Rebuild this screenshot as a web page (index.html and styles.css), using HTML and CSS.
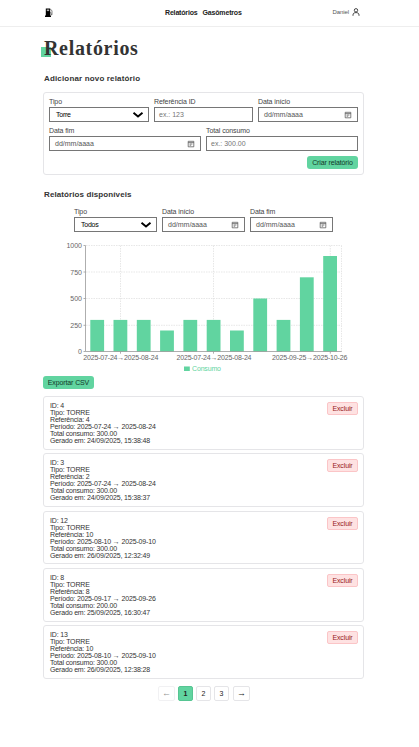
FILE: index.html
```html
<!DOCTYPE html>
<html lang="pt-BR">
<head>
<meta charset="utf-8">
<title>Relatórios</title>
<link rel="stylesheet" href="styles.css">
</head>
<body>
<svg class="defs" width="0" height="0">
  <symbol id="cal" viewBox="0 0 8 8"><path d="M1.2 1.3h5.6v5.5H1.2z M1.2 2.6h5.6 M2.6 4h2.8 M2.6 5.2h1.6" fill="none" stroke="#555" stroke-width=".75"/></symbol>
  <symbol id="chev" viewBox="0 0 12 8"><path d="M1.5 1.7 6 5.5l4.5-3.8" fill="none" stroke="#000" stroke-width="1.9"/></symbol>
</svg>
<header class="top">
  <div class="wrap bar">
    <svg class="pump" width="10" height="10" viewBox="0 0 10 10"><path d="M1.8 .5h4.4v7H7v1.4H1V7.5h.8z" fill="#000"/><path d="M2.8 1.5h2.4v1.6H2.8z" fill="#aaa"/><path d="M6.2 1.2 8 2.6v4.2H7V4.6h-.8" fill="none" stroke="#333" stroke-width=".6"/></svg>
    <nav><a>Relatórios</a><a>Gasômetros</a></nav>
    <div class="user"><span>Daniel</span><svg width="8" height="8" viewBox="0 0 8 8"><circle cx="4" cy="2.3" r="1.7"/><path d="M1 7.8V7c0-1.7 1.2-2.4 3-2.4S7 5.3 7 7v.8"/></svg></div>
  </div>
</header>
<main class="wrap">
  <h1><span>Relatórios</span></h1>
  <h2><span class="h-add">Adicionar novo relatório</span></h2>
  <section class="card form">
    <div class="row r3">
      <label>Tipo<div class="field sel"><span>Torre</span><svg><use href="#chev"/></svg></div></label>
      <label>Referência ID<div class="field ph"><span>ex.: 123</span></div></label>
      <label>Data início<div class="field date"><span>dd/mm/aaaa</span><svg><use href="#cal"/></svg></div></label>
    </div>
    <div class="row r2">
      <label>Data fim<div class="field date"><span>dd/mm/aaaa</span><svg><use href="#cal"/></svg></div></label>
      <label>Total consumo<div class="field ph"><span>ex.: 300.00</span></div></label>
    </div>
    <button class="btn create">Criar relatório</button>
  </section>
  <h2 class="second"><span class="h-list">Relatórios disponíveis</span></h2>
  <div class="filters">
    <label>Tipo<div class="field sel"><span>Todos</span><svg><use href="#chev"/></svg></div></label>
    <label>Data início<div class="field date"><span>dd/mm/aaaa</span><svg><use href="#cal"/></svg></div></label>
    <label>Data fim<div class="field date"><span>dd/mm/aaaa</span><svg><use href="#cal"/></svg></div></label>
  </div>
  <svg class="chart" width="321" height="140" viewBox="43 236 321 140">
    <g class="grid"><path d="M86 245.5H341.5M86 272H341.5M86 298.5H341.5M86 325.3H341.5M120.5 245.5V351M213.5 245.5V351M330.3 245.5V351M341.5 245.5V351"/></g>
    <g class="bars">
      <rect x="90.3" y="319.9" width="13.8" height="31.8"/><rect x="113.5" y="319.9" width="13.8" height="31.8"/><rect x="136.8" y="319.9" width="13.8" height="31.8"/><rect x="160.1" y="330.5" width="13.8" height="21.2"/><rect x="183.4" y="319.9" width="13.8" height="31.8"/><rect x="206.7" y="319.9" width="13.8" height="31.8"/><rect x="230" y="330.5" width="13.8" height="21.2"/><rect x="253.3" y="298.5" width="13.8" height="53.2"/><rect x="276.6" y="319.9" width="13.8" height="31.8"/><rect x="299.9" y="277.3" width="13.8" height="74.4"/><rect x="323.2" y="256" width="13.8" height="95.7"/>
    </g>
    <path class="axis" d="M85.5 245.5V351.5H341.8M83.5 245.5h2M83.5 272h2M83.5 298.5h2M83.5 325.3h2M83.5 351.5h2M120.5 351.5v2.2M213.5 351.5v2.2M330.3 351.5v2.2"/>
    <g class="ylab"><text x="82" y="248">1000</text><text x="82" y="274.5">750</text><text x="82" y="301">500</text><text x="82" y="327.8">250</text><text x="82" y="354">0</text></g>
    <g class="xlab"><text x="83.3" y="360" textLength="75">2025-07-24→2025-08-24</text><text x="176.5" y="360" textLength="75">2025-07-24→2025-08-24</text><text x="272" y="360" textLength="75.3">2025-09-25→2025-10-26</text></g>
    <rect class="key" x="184" y="366.5" width="5.8" height="4.5"/>
    <text class="legend" x="192" y="371.3" textLength="29">Consumo</text>
  </svg>
  <button class="btn export">Exportar CSV</button>
  <div class="list">
    <article class="card item"><p>ID: 4<br>Tipo: TORRE<br>Referência: 4<br>Período: 2025-07-24 → 2025-08-24<br>Total consumo: 300.00<br>Gerado em: 24/09/2025, 15:38:48</p><button class="del">Excluir</button></article>
    <article class="card item"><p>ID: 3<br>Tipo: TORRE<br>Referência: 2<br>Período: 2025-07-24 → 2025-08-24<br>Total consumo: 300.00<br>Gerado em: 24/09/2025, 15:38:37</p><button class="del">Excluir</button></article>
    <article class="card item"><p>ID: 12<br>Tipo: TORRE<br>Referência: 10<br>Período: 2025-08-10 → 2025-09-10<br>Total consumo: 300.00<br>Gerado em: 26/09/2025, 12:32:49</p><button class="del">Excluir</button></article>
    <article class="card item"><p>ID: 8<br>Tipo: TORRE<br>Referência: 8<br>Período: 2025-09-17 → 2025-09-26<br>Total consumo: 200.00<br>Gerado em: 25/09/2025, 16:30:47</p><button class="del">Excluir</button></article>
    <article class="card item"><p>ID: 13<br>Tipo: TORRE<br>Referência: 10<br>Período: 2025-08-10 → 2025-09-10<br>Total consumo: 300.00<br>Gerado em: 26/09/2025, 12:38:28</p><button class="del">Excluir</button></article>
  </div>
  <nav class="pages"><button class="arrow off">←</button><button class="on">1</button><button>2</button><button>3</button><button class="arrow next">→</button></nav>
</main>
</body>
</html>
```
FILE: styles.css
```css
* { box-sizing: border-box; }
body { margin: 0; background: #fff; color: #333; font: 7px/7px "Liberation Sans", Arial, sans-serif; }
.defs { position: absolute; }
button { font: inherit; margin: 0; padding: 0; letter-spacing: -.12px; }
.wrap { width: 321px; margin: 0 auto 0 43px; }
.top { height: 27px; border-bottom: 1px solid #eee; }
.bar { height: 25px; display: grid; grid-template-columns: 122px 1fr 60px; align-items: center; }
.pump { margin-left: 1px; }
.bar nav { display: flex; gap: 5px; font-size: 7px; font-weight: 700; letter-spacing: -.17px; color: #222; }
.user { display: flex; align-items: center; justify-content: flex-end; gap: 3px; padding-right: 4px; font-size: 6px; letter-spacing: -.1px; color: #555; }
.user svg { fill: none; stroke: #333; stroke-width: .9; margin-top: -1px; }
h1 { margin: 9px 0 0; height: 25px; padding-left: 1px; font: 700 20px/24px "Liberation Serif", serif; color: #333; }
h1 span { display: inline-block; letter-spacing: .68px; background: linear-gradient(#61d4a0, #61d4a0) 0 11px / 10px 10px no-repeat; margin-left: -3px; padding-left: 3px; }
h2 { margin: 13px 0 0; height: 10px; font: 700 8px/10px "Liberation Sans", Arial, sans-serif; padding-left: 1px; color: #333; }
.h-add { letter-spacing: .16px; }
.h-list { letter-spacing: .1px; }
h2.second { margin-top: 15px; }
.card { border: 1px solid #e5e5e8; border-radius: 3px; background: #fff; }
.form { margin-top: 8px; height: 83px; padding: 5px 5px 0; display: flex; flex-direction: column; }
.row { display: grid; gap: 5px; height: 29px; }
.r3 { grid-template-columns: 100px 99px 100px; }
.r2 { grid-template-columns: 152px 152px; }
label { display: block; line-height: 7px; letter-spacing: -.1px; color: #444; }
.field { margin-top: 2px; height: 15px; border: 1px solid #767676; display: flex; align-items: center; justify-content: space-between; padding: 0 5px; background: #fff; color: #555; letter-spacing: 0; }
.date span { margin-top: -1px; }
.field svg { width: 8px; height: 8px; }
.sel { color: #000; padding: 0 4px 0 6px; letter-spacing: -.25px; }
.sel svg { width: 12px; height: 8px; }
.ph { color: #757575; padding-left: 4px; }
.btn { border: 0; border-radius: 3px; background: #61d4a0; color: #12382a; height: 13px; }
.create { width: 51px; align-self: flex-end; }
.filters { margin: 8px 0 0 31px; display: grid; grid-template-columns: repeat(3, 83px); gap: 5px; }
.chart { display: block; margin-top: 4px; }
.grid path { fill: none; stroke: #ddd; stroke-width: .7; stroke-dasharray: 1.5 1; }
.bars rect { fill: #61d4a0; }
.axis { fill: none; stroke: #999; stroke-width: .8; }
.ylab, .xlab { fill: #666; font-size: 7px; }
.ylab { text-anchor: end; }
.key, .legend { fill: #61d4a0; }
.export { display: block; width: 51px; }
.list { margin-top: 7px; display: grid; gap: 3.5px; }
.item { height: 53.75px; padding: 5px 5px 0 6px; display: flex; justify-content: space-between; align-items: flex-start; }
.item p { margin: 0; letter-spacing: -.165px; }
.del { width: 31px; height: 13px; border: 1px solid #fbc5c7; border-radius: 2px; background: #fee2e2; color: #991b1b; }
.pages { margin: 7px 0 0 115px; display: flex; gap: 3px; }
.pages button { width: 15px; height: 15px; border: 1px solid #e5e5e8; border-radius: 2px; background: #fff; color: #222; }
.pages .arrow { width: 17px; font-size: 9px; }
.pages .off { opacity: .5; }
.pages .next { margin-left: 1px; }
.pages .on { background: #61d4a0; border-color: #56c592; font-weight: 700; }
```
